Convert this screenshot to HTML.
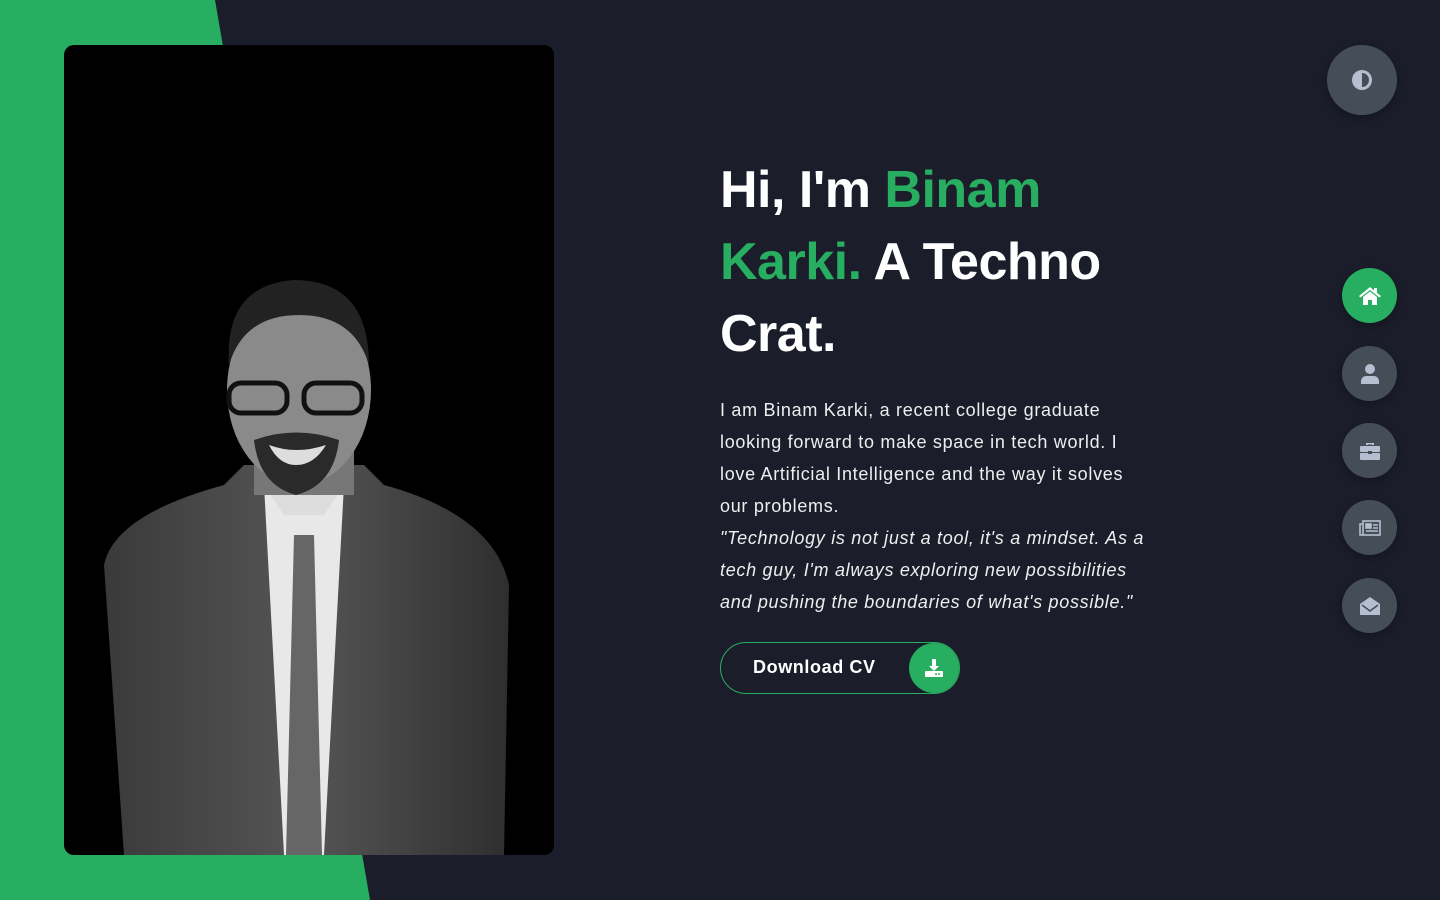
<!DOCTYPE html>
<html><head><meta charset="utf-8"><style>
*{margin:0;padding:0;box-sizing:border-box}
body{width:1440px;height:900px;background:#1b1d2b;font-family:"Liberation Sans",sans-serif;position:relative;overflow:hidden;color:#fff}
.green{position:absolute;left:0;top:0;width:1440px;height:900px}
.photo{position:absolute;left:64px;top:45px;width:490px;height:810px;background:#000;border-radius:10px;overflow:hidden}
h1{position:absolute;left:720px;top:154px;width:460px;font-size:52px;line-height:72px;font-weight:bold;letter-spacing:-0.5px}
h1 span{color:#27ae60}
p{position:absolute;left:720px;top:394px;width:432px;font-size:18px;line-height:32px;color:#eee;letter-spacing:0.7px}
.btn{position:absolute;left:720px;top:642px;width:240px;height:52px;border:1px solid #27ae60;border-radius:26px;font-size:18px;font-weight:bold;padding:14px 0 0 32px;letter-spacing:0.6px}
.btn .c{position:absolute;right:0;top:0;width:50px;height:50px;border-radius:50%;background:#27ae60;display:flex;align-items:center;justify-content:center}
.nav{position:absolute;left:1342px;width:55px;height:55px;border-radius:50%;background:#454e56;display:flex;align-items:center;justify-content:center;box-shadow:0 3px 10px rgba(0,0,0,.3)}
.theme{position:absolute;left:1327px;top:45px;width:70px;height:70px;border-radius:50%;background:#454e56;display:flex;align-items:center;justify-content:center;box-shadow:0 3px 10px rgba(0,0,0,.3)}
</style></head><body>
<svg class="green" viewBox="0 0 1440 900"><polygon points="0,0 215,0 370,900 0,900" fill="#27ae60"/></svg>
<div class="photo"><svg width="490" height="810" viewBox="0 0 490 810">
<defs><linearGradient id="s" x1="0" x2="1"><stop offset="0" stop-color="#3a3a3a"/><stop offset=".5" stop-color="#555"/><stop offset="1" stop-color="#2e2e2e"/></linearGradient></defs>
<path d="M60,810 L40,520 Q50,470 160,440 L180,420 L300,420 L320,440 Q430,470 445,540 L440,810 Z" fill="url(#s)"/>
<path d="M200,440 L240,560 L280,440 Z" fill="#ddd"/>
<path d="M200,440 L220,810 L260,810 L280,440 L260,470 L240,470 L220,470Z" fill="#e8e8e8"/>
<path d="M230,490 L250,490 L258,810 L222,810Z" fill="#666"/>
<rect x="190" y="380" width="100" height="70" fill="#777"/>
<ellipse cx="235" cy="345" rx="72" ry="95" fill="#8a8a8a"/>
<path d="M165,320 Q160,240 230,235 Q305,235 305,320 Q290,270 235,270 Q180,270 165,320Z" fill="#222"/>
<rect x="165" y="338" width="58" height="30" rx="12" fill="none" stroke="#111" stroke-width="5"/>
<rect x="240" y="338" width="58" height="30" rx="12" fill="none" stroke="#111" stroke-width="5"/>
<path d="M190,395 Q232,380 275,395 Q270,440 232,450 Q195,440 190,395Z" fill="#2a2a2a"/>
<path d="M205,400 Q232,410 262,400 Q250,420 232,420 Q215,420 205,400Z" fill="#ddd"/>
</svg></div>
<h1>Hi, I'm <span>Binam Karki.</span> A Techno Crat.</h1>
<p>I am Binam Karki, a recent college graduate looking forward to make space in tech world. I love Artificial Intelligence and the way it solves our problems.<br><i>"Technology is not just a tool, it's a mindset. As a tech guy, I'm always exploring new possibilities and pushing the boundaries of what's possible."</i></p>
<div class="btn">Download CV<div class="c"><svg width="20" height="20" viewBox="0 0 20 20" fill="#fff"><path d="M8 1h4v7h3l-5 5-5-5h3z"/><rect x="1" y="13" width="18" height="6" rx="1"/><circle cx="15" cy="16" r="1" fill="#27ae60"/><circle cx="12" cy="16" r="1" fill="#27ae60"/></svg></div></div>
<div class="theme"><svg width="24" height="24" viewBox="0 0 24 24"><circle cx="12" cy="12" r="10" fill="#b5bfd1"/><path d="M12 5a7 7 0 0 1 0 14z" fill="#454e56"/></svg></div>
<div class="nav" style="top:268px;background:#27ae60"><svg width="22" height="20" viewBox="0 0 22 20" fill="#fff"><path d="M11 1L0 10l1.5 1.5L11 4l9.5 7.5L22 10l-4-3V2h-3v2.5z"/><path d="M4 11l7-5.5 7 5.5v8h-5v-5h-4v5H4z"/></svg></div>
<div class="nav" style="top:346px"><svg width="18" height="20" viewBox="0 0 18 20" fill="#b5bfd1"><circle cx="9" cy="5" r="5"/><path d="M0 20v-3a5 5 0 0 1 5-5h8a5 5 0 0 1 5 5v3z"/></svg></div>
<div class="nav" style="top:423px"><svg width="20" height="18" viewBox="0 0 20 18" fill="#b5bfd1"><path d="M6 3V1h8v2h-2V2.5H8V3z"/><rect x="0" y="4" width="20" height="6" rx="1"/><rect x="0" y="11" width="20" height="7" rx="1"/><rect x="8" y="9" width="4" height="3" fill="#454e56"/></svg></div>
<div class="nav" style="top:500px"><svg width="22" height="16" viewBox="0 0 22 16" fill="none" stroke="#b5bfd1" stroke-width="1.6"><rect x="4" y="1" width="17" height="14"/><path d="M4 4H1v11h3"/><rect x="7" y="4" width="5" height="4" fill="#b5bfd1"/><path d="M14 5h5M14 8h5M7 11h12"/></svg></div>
<div class="nav" style="top:578px"><svg width="20" height="18" viewBox="0 0 20 18"><path d="M0 7L10 0l10 7v11H0z" fill="#b5bfd1"/><path d="M2 8l8 6 8-6" stroke="#454e56" stroke-width="1.5" fill="none"/></svg></div>
</body></html>
